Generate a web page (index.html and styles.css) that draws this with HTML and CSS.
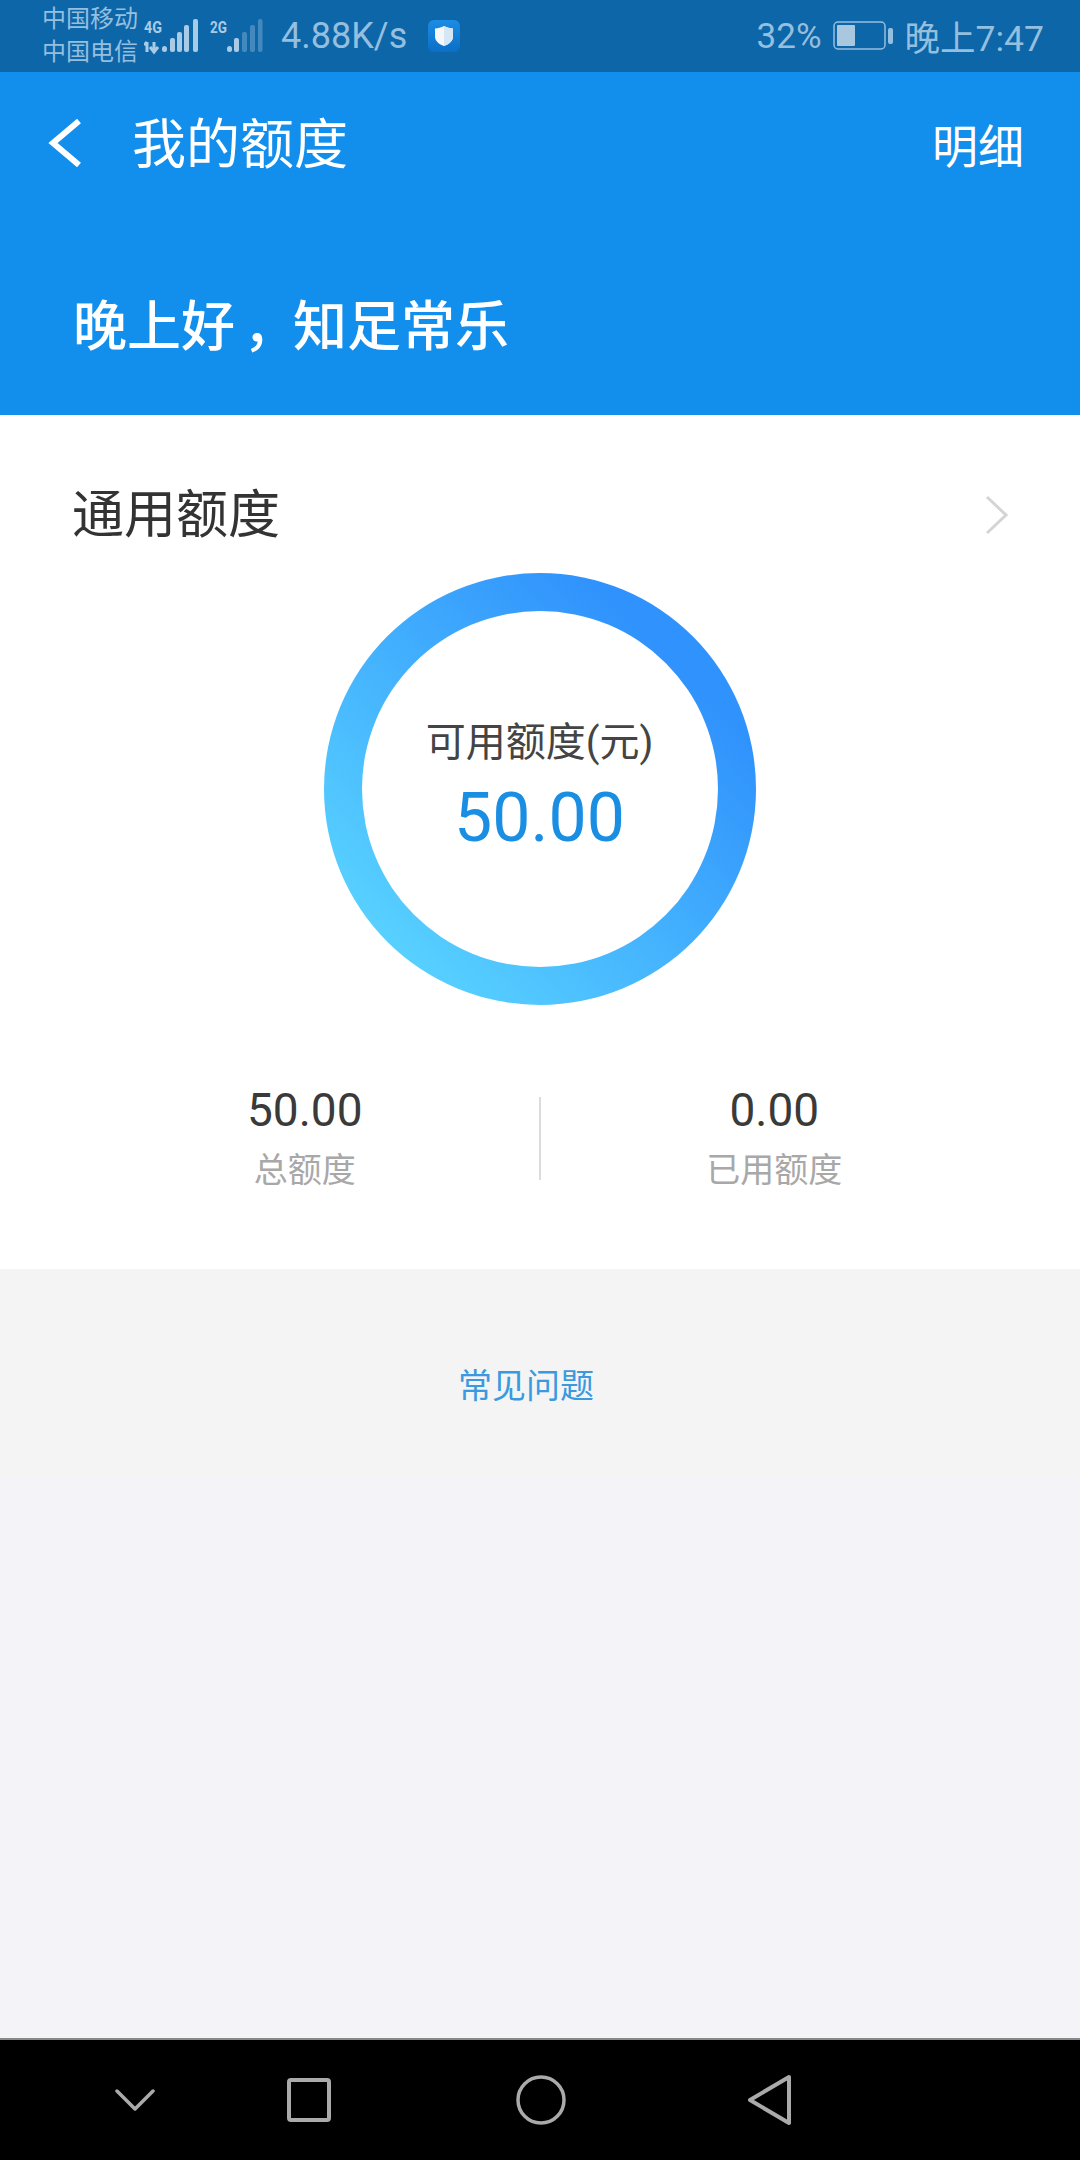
FILE: index.html
```html
<!DOCTYPE html>
<html lang="zh-CN">
  <head>
    <meta charset="UTF-8" />
    <meta name="viewport" content="width=device-width, initial-scale=1.0" />
    <title>我的额度</title>
    <link rel="stylesheet" href="styles.css">
  </head>
  <body>
    <div class="status-bar">
      <div class="carriers">
        <span>中国移动</span>
        <span>中国电信</span>
      </div>
      <svg class="signals" width="120" height="72" viewBox="144 0 120 72">
        <text class="net-label" x="144" y="33" textLength="18" lengthAdjust="spacingAndGlyphs">4G</text>
        <path class="arrows" d="M147 42v10M144 45l3-3M154 42v10M150 47l4 5 4-5" />
        <rect class="bar" x="162" y="46" width="5" height="6" rx="2.500" />
        <rect class="bar" x="170" y="38" width="5" height="14" rx="2" />
        <rect class="bar" x="177" y="32" width="5" height="20" rx="2" />
        <rect class="bar" x="184" y="25" width="5" height="27" rx="2" />
        <rect class="bar" x="193" y="19" width="5" height="33" rx="2" />
        <text class="net-label" x="210" y="33" textLength="17" lengthAdjust="spacingAndGlyphs">2G</text>
        <rect class="bar" x="227" y="46" width="5" height="6" rx="2.500" />
        <rect class="bar" x="234" y="38" width="5" height="14" rx="2" />
        <rect class="bar bar-off" x="242" y="32" width="5" height="20" rx="2" />
        <rect class="bar bar-off" x="250" y="25" width="5" height="27" rx="2" />
        <rect class="bar bar-off" x="258" y="19" width="4.500" height="33" rx="2" />
      </svg>
      <span class="speed">4.88K/s</span>
      <svg class="shield" width="32" height="32" viewBox="0 0 32 32">
        <defs>
          <linearGradient id="shield-bg" x1="0" y1="0" x2="0" y2="1">
            <stop offset="0" stop-color="#1c8ce4" />
            <stop offset="1" stop-color="#0b6fc6" />
          </linearGradient>
        </defs>
        <rect width="32" height="32" rx="6" fill="url(#shield-bg)" />
        <path d="M16 6c3 1.400 6 2.200 9 2.400v8c0 4.600-4 7.800-9 9.600-5-1.800-9-5-9-9.600v-8c3-.2 6-1 9-2.400z" fill="#f4f8fc" />
        <path d="M16 6c3 1.400 6 2.200 9 2.400v8c0 4.600-4 7.800-9 9.600z" fill="#d5e6f5" />
      </svg>
      <div class="status-right">
        <span class="battery-text">32%</span>
        <svg class="battery" width="60" height="30" viewBox="0 0 60 30">
          <rect x="1" y="1" width="51" height="27" rx="4" fill="none" stroke="#94bfdf" stroke-width="1.500" />
          <rect x="4" y="4" width="18" height="21" rx="1" fill="#a9c8e0" />
          <rect x="55" y="7" width="5" height="16" rx="2" fill="#94bfdf" />
        </svg>
        <span class="clock">晚上7:47</span>
      </div>
    </div>

    <header class="app-header">
      <div class="title-row">
        <svg class="back-icon" width="36" height="50" viewBox="0 0 36 50">
          <path d="M31 3 5 25l26 22" fill="none" stroke="#fff" stroke-width="6" />
        </svg>
        <h1>我的额度</h1>
        <a class="detail-link">明细</a>
      </div>
      <p class="greeting">晚上好<span class="comma">，</span>知足常乐</p>
    </header>

    <main>
      <section class="quota-card">
        <div class="card-title">
          <h2>通用额度</h2>
          <svg class="card-arrow" width="26" height="40" viewBox="0 0 26 40">
            <path d="M3 2l19 18L3 38" fill="none" stroke="#d4d4d4" stroke-width="3" />
          </svg>
        </div>
        <div class="ring">
          <div class="ring-inner">
            <span class="ring-label">可用额度(元)</span>
            <span class="ring-value">50.00</span>
          </div>
        </div>
        <div class="stats">
          <div class="stat">
            <span class="stat-value">50.00</span>
            <span class="stat-label">总额度</span>
          </div>
          <div class="stat-divider"></div>
          <div class="stat">
            <span class="stat-value">0.00</span>
            <span class="stat-label">已用额度</span>
          </div>
        </div>
      </section>

      <div class="faq-strip">
        <a class="faq-link">常见问题</a>
      </div>
    </main>

    <nav class="nav-bar">
      <svg width="40" height="24" viewBox="0 0 40 24">
        <path d="M2 3l18 18L38 3" fill="none" stroke="#aaa" stroke-width="3.500" stroke-linecap="round" stroke-linejoin="round" />
      </svg>
      <svg width="46" height="46" viewBox="0 0 46 46">
        <rect x="3" y="3" width="40" height="40" rx="2" fill="none" stroke="#aaa" stroke-width="4" />
      </svg>
      <svg width="50" height="50" viewBox="0 0 50 50">
        <circle cx="25" cy="25" r="23" fill="none" stroke="#aaa" stroke-width="3.500" />
      </svg>
      <svg width="46" height="52" viewBox="0 0 46 52">
        <path d="M42 3 3 26l39 23z" fill="none" stroke="#aaa" stroke-width="4" stroke-linejoin="round" />
      </svg>
    </nav>
  </body>
</html>
```

FILE: styles.css
```css
* {
  margin: 0;
  padding: 0;
  box-sizing: border-box;
}

body {
  width: 1080px;
  height: 2160px;
  display: flex;
  flex-direction: column;
  overflow: hidden;
  background-color: #f3f3f8;
  font-family: Roboto, "Noto Sans CJK SC", sans-serif;
}

.status-bar {
  height: 72px;
  padding-left: 42px;
  display: flex;
  align-items: center;
  flex-shrink: 0;
  background-color: #0d66a8;
  color: #94bfdf;
}

.carriers {
  width: 102px;
  display: flex;
  flex-direction: column;
  font-size: 24px;
  line-height: 33px;
}

.net-label {
  font-size: 17px;
  font-weight: 700;
  fill: #a9cbe5;
}

.arrows {
  fill: none;
  stroke: #a9cbe5;
  stroke-width: 3;
}

.bar {
  fill: #a9cbe5;
}

.bar-off {
  opacity: 0.35;
}

.speed {
  margin-left: 17px;
  font-size: 36px;
}

.shield {
  margin-left: 21px;
}

.status-right {
  margin-left: auto;
  padding-right: 36px;
  display: flex;
  align-items: center;
  font-size: 35px;
}

.battery {
  margin-left: 11px;
  margin-right: 12px;
}

.clock {
  font-size: 35.500px;
  margin-top: -2px;
}

.app-header {
  height: 343px;
  flex-shrink: 0;
  background-color: #128eec;
  color: #fff;
}

.title-row {
  height: 142px;
  padding: 0 56px 0 48px;
  display: flex;
  align-items: center;
}

.title-row h1 {
  margin-left: 48px;
  margin-bottom: 5px;
  font-size: 54px;
  font-weight: 400;
}

.detail-link {
  margin-left: auto;
  font-size: 46px;
}

.greeting {
  padding-left: 73px;
  margin-top: 81px;
  font-size: 54px;
  font-weight: 500;
  line-height: 66px;
}

.comma {
  padding-left: 8px;
  letter-spacing: -4px;
}

main {
  flex: 1;
  display: flex;
  flex-direction: column;
}

.quota-card {
  height: 854px;
  padding: 59px 72px 0 71px;
  background-color: #fff;
}

.card-title {
  height: 75px;
  display: flex;
  justify-content: space-between;
  align-items: center;
  color: #333;
}

.card-title h2 {
  margin-left: 1px;
  margin-bottom: 3px;
  font-size: 52px;
  font-weight: 400;
}

.card-arrow {
  margin-top: 6px;
  margin-right: -2px;
}

.ring {
  width: 432px;
  height: 432px;
  margin: 24px auto 0;
  padding: 38px;
  border-radius: 50%;
  background: linear-gradient(225deg, #3092fc 20%, #57d0ff 85%);
}

.ring-inner {
  height: 100%;
  display: flex;
  flex-direction: column;
  align-items: center;
  border-radius: 50%;
  background-color: #fff;
}

.ring-label {
  margin-top: 104px;
  font-size: 40px;
  line-height: 56px;
  color: #444;
}

.ring-value {
  margin-top: 8px;
  font-size: 68px;
  line-height: 78px;
  color: #1a8ee2;
}

.stats {
  margin-top: 80px;
  display: flex;
}

.stat {
  flex: 1;
  display: flex;
  flex-direction: column;
  align-items: center;
  gap: 10px;
}

.stat-value {
  font-size: 46px;
  line-height: 50px;
  color: #3a3a3a;
}

.stat-label {
  font-size: 34px;
  line-height: 50px;
  color: #a8a8a8;
}

.stat-divider {
  width: 2px;
  height: 83px;
  margin-top: 12px;
  background-color: #dcdcdc;
}

.faq-strip {
  height: 206px;
  padding: 92px 486px 0 0;
  text-align: right;
  background-color: #f4f4f4;
}

.faq-link {
  font-size: 34px;
  line-height: 50px;
  color: #3a9ae0;
}

.nav-bar {
  height: 122px;
  flex-shrink: 0;
  display: flex;
  align-items: center;
  border-top: 2px solid #888;
  background-color: #000;
}

.nav-bar svg:nth-child(1) { margin-left: 115px; }
.nav-bar svg:nth-child(2) { margin-left: 131px; }
.nav-bar svg:nth-child(3) { margin-left: 184px; }
.nav-bar svg:nth-child(4) { margin-left: 181px; }
```
